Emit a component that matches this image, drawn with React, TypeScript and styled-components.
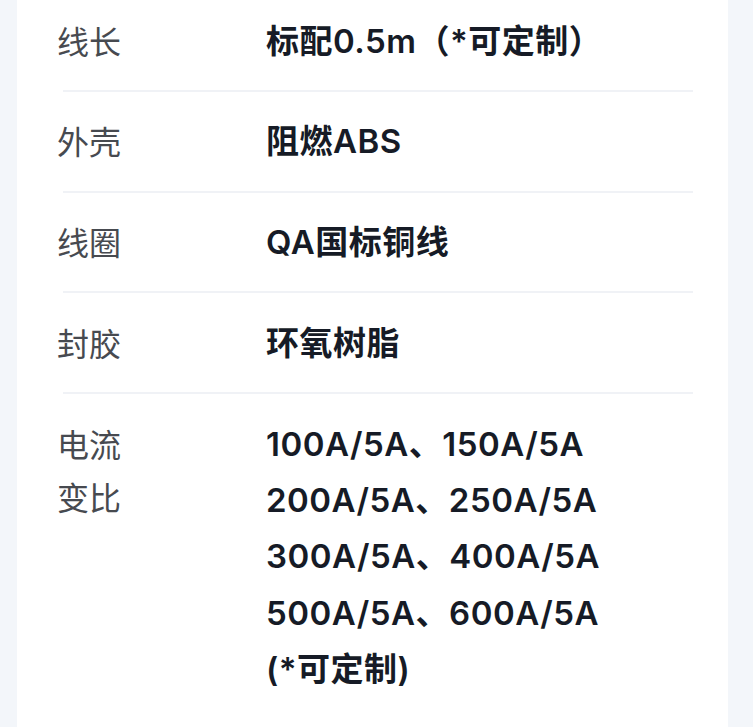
import styled, { createGlobalStyle } from 'styled-components'

const GlobalStyle = createGlobalStyle`
  html, body {
    margin: 0;
    padding: 0;
    background: #f3f6fa;
    font-family: "Noto Sans CJK SC", "Noto Sans", sans-serif;
  }
`

interface Spec {
    label: string[]
    value: string[]
}

const specs: Spec[] = [
    {label: ['线长'], value: ['标配0.5m（*可定制）']},
    {label: ['外壳'], value: ['阻燃ABS']},
    {label: ['线圈'], value: ['QA国标铜线']},
    {label: ['封胶'], value: ['环氧树脂']},
    {
        label: ['电流', '变比'],
        value: ['100A/5A、150A/5A', '200A/5A、250A/5A', '300A/5A、400A/5A', '500A/5A、600A/5A', '(*可定制)'],
    },
]

const Page = styled.div`
  padding: 0 25px 0 17px;
  height: 727px;
  overflow: hidden;
`

const Card = styled.div`
  background: #fff;
  margin-top: -9px;
  min-height: 760px;
`

const Row = styled.div`
  display: flex;
  align-items: flex-start;
  padding: 21.5px 0 21px 40px;
`

const Label = styled.div`
  width: 209px;
  flex-shrink: 0;
  font-size: 32px;
  line-height: 53px;
  padding-top: 1px;
  color: #474a50;
  font-weight: 400;
`

const Value = styled.div`
  font-family: Inter, "Noto Sans CJK SC", sans-serif;
  font-size: 33px;
  letter-spacing: 0.5px;
  color: #161b26;
  font-weight: 600;
`

const Line = styled.div`
  height: 56.3px;
  line-height: 56px;
`

const Divider = styled.div`
  height: 2px;
  background: #f0f2f6;
  margin: 0 35px 0 46px;
`

export default function App() {
    return (
        <>
            <GlobalStyle/>
            <Page>
                <Card>
                    {specs.map((item, index) => (
                        <div key={index}>
                            <Row>
                                <Label>
                                    {item.label.map((l, i) => <div key={i}>{l}</div>)}
                                </Label>
                                <Value>
                                    {item.value.map((v, i) => <Line key={i}>{v}</Line>)}
                                </Value>
                            </Row>
                            {index < specs.length - 1 && <Divider/>}
                        </div>
                    ))}
                </Card>
            </Page>
        </>
    )
}
